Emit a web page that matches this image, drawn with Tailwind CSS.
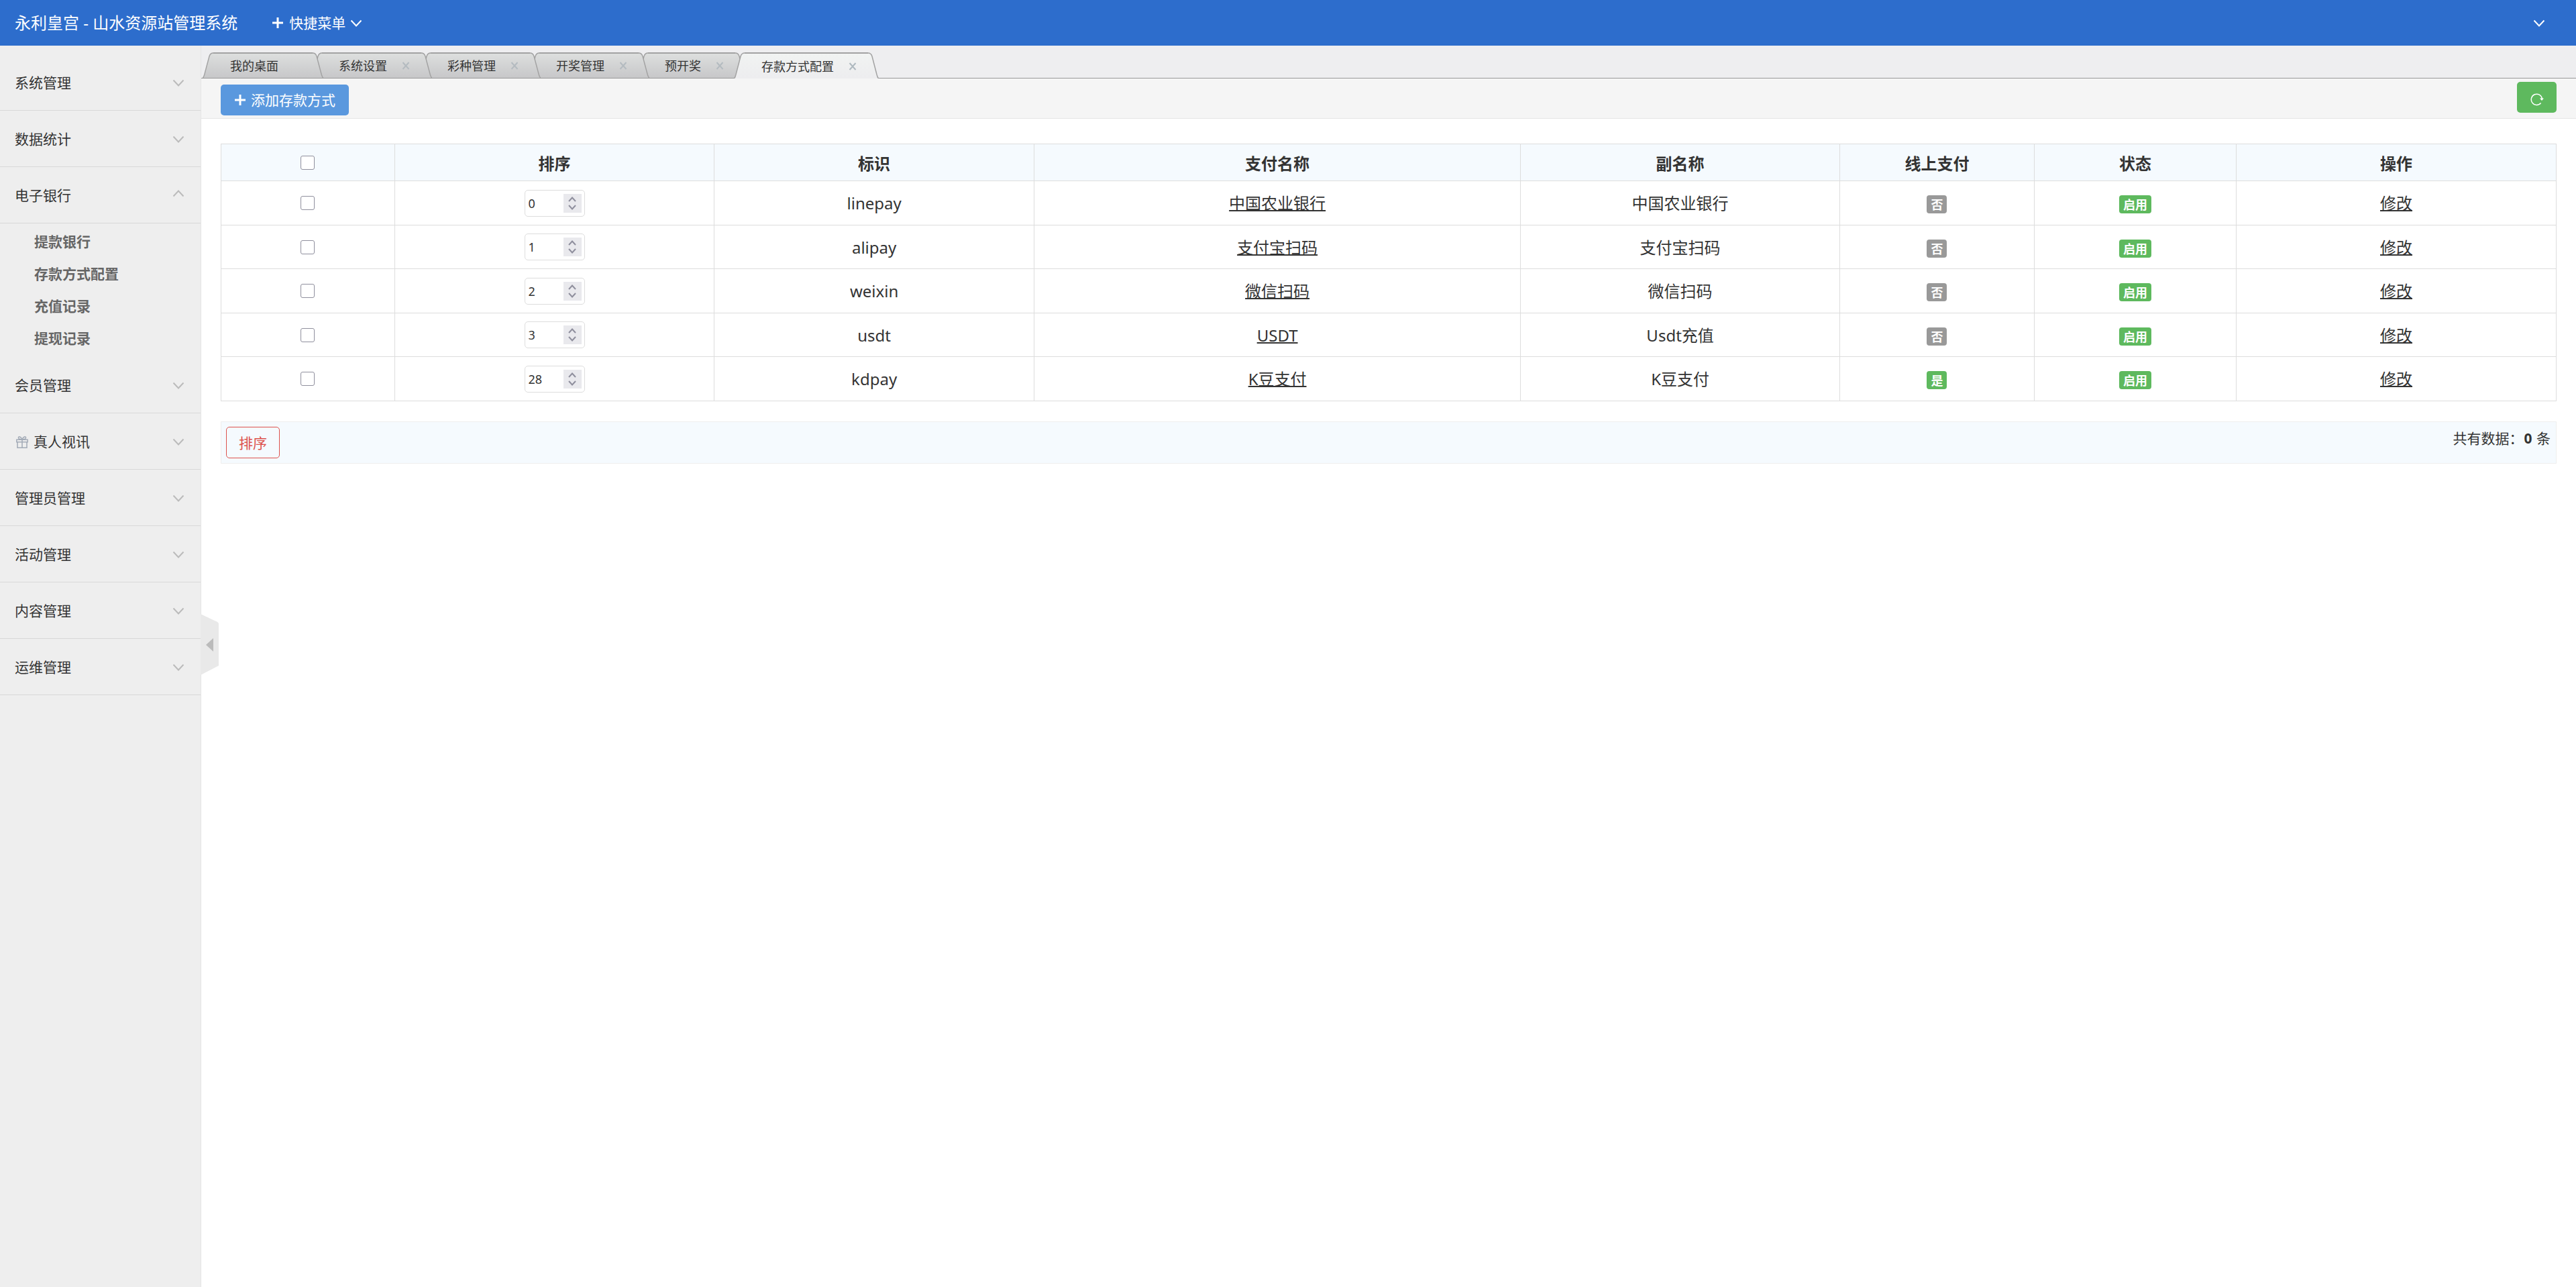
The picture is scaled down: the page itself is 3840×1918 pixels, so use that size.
<!DOCTYPE html>
<html lang="zh-CN">
<head>
  <meta charset="UTF-8" />
  <meta name="viewport" content="width=device-width, initial-scale=1.0"/>
  <title>永利皇宫 - 山水资源站管理系统</title>
  <script src="https://cdn.jsdelivr.net/npm/@tailwindcss/browser@4"></script>
</head>
<body class="min-h-screen flex flex-col bg-white text-[#333] font-['Noto_Sans','Noto_Sans_CJK_SC',sans-serif]">
  <!-- HEADER -->
  <header class="h-[68px] bg-[#2d6dcc] text-white flex items-center pl-[22px] pr-[47px]">
    <a href="#" class="text-2xl leading-8">永利皇宫 - 山水资源站管理系统</a>
    <button type="button" class="ml-[51px] flex items-center text-[21px] leading-7">
      <svg class="w-[18px] h-[18px] mr-2" viewBox="0 0 18 18" fill="none" stroke="currentColor" stroke-width="3"><path d="M9 1v16M1 9h16"/></svg>
      快捷菜单
      <svg class="w-4 h-4 ml-2" viewBox="0 0 16 16" fill="none" stroke="currentColor" stroke-width="2"><path d="M.5 4.500 8 12.500l7.500-8"/></svg>
    </button>
    <button type="button" class="ml-auto" aria-label="账户">
      <svg class="w-4 h-4" viewBox="0 0 16 16" fill="none" stroke="currentColor" stroke-width="2"><path d="M.5 4.500 8 12.500l7.500-8"/></svg>
    </button>
  </header>

  <div class="flex flex-1">
    <!-- SIDEBAR -->
    <aside class="relative w-[300px] shrink-0 bg-[#eee] border-r border-[#e5e5e5]">
      <nav id="menu" class="pt-[13px]"></nav>
      <button type="button" class="absolute left-full top-[847px] w-[27px] h-[91px]" aria-label="收起菜单">
        <svg class="w-[27px] h-[91px]" viewBox="0 0 27 91"><path d="M0 0 21 10q6 2 6 5v62L0 91z" fill="#e9e9e9"/><path d="M8 46 19 36v20z" fill="#bbb"/></svg>
      </button>
    </aside>

    <main class="flex-1 min-w-0">
      <!-- TABS -->
      <div class="h-[49px] bg-[#eeeef0] border-b border-[#999] flex items-end pl-[2px]">
        <ul id="tabs" class="flex items-end"></ul>
      </div>

      <!-- TOOLBAR -->
      <div class="h-[60px] bg-[#f5f5f5] border-b border-[#e5e5e5] flex items-start justify-between px-[29px]">
        <button type="button" class="mt-[9px] h-[46px] px-5 rounded-[5px] bg-[#5a98de] text-white text-[21px] leading-7 flex items-center">
          <svg class="w-[18px] h-[18px] mr-[7px]" viewBox="0 0 18 18" fill="none" stroke="currentColor" stroke-width="3"><path d="M9 1v16M1 9h16"/></svg>
          添加存款方式
        </button>
        <button type="button" class="mt-[5px] w-[59px] h-[46px] rounded-[5px] bg-[#5eb95e] text-white flex items-center justify-center pt-1.5" aria-label="刷新">
          <svg class="w-5 h-5" viewBox="0 0 20 20" fill="none" stroke="currentColor"><path d="M15.600 15.500A8.100 8.100 0 1 1 17.400 9" stroke-width="1.500"/><path d="M14 8.500h6l-3 3.500z" fill="currentColor" stroke="none"/></svg>
        </button>
      </div>

      <!-- TABLE -->
      <section class="px-[29px] pt-[37px]">
        <table class="w-full table-fixed border-collapse text-2xl leading-8 text-center">
          <colgroup>
            <col class="w-[7.44%]"><col class="w-[13.68%]"><col class="w-[13.70%]"><col class="w-[20.83%]">
            <col class="w-[13.67%]"><col class="w-[8.33%]"><col class="w-[8.65%]"><col class="w-[13.70%]">
          </colgroup>
          <thead>
            <tr class="h-[55px] bg-[#f5fafe]">
              <th class="border border-[#ddd]"><input type="checkbox" aria-label="全选" class="block mx-auto size-[21px] appearance-none bg-white border border-[#8f8f9d] rounded-[3px]"></th>
              <th class="border border-[#ddd] pt-1">排序</th>
              <th class="border border-[#ddd] pt-1">标识</th>
              <th class="border border-[#ddd] pt-1">支付名称</th>
              <th class="border border-[#ddd] pt-1">副名称</th>
              <th class="border border-[#ddd] pt-1">线上支付</th>
              <th class="border border-[#ddd] pt-1">状态</th>
              <th class="border border-[#ddd] pt-1">操作</th>
            </tr>
          </thead>
          <tbody id="payList"></tbody>
        </table>

        <div class="mt-[30px] h-[63px] bg-[#f5fafe] border border-[#eee] flex items-start justify-between pl-[7px] pr-2 pt-[7px]">
          <button type="button" class="w-20 h-[47px] border border-[#dd514c] rounded-[5px] text-[#dd514c] text-[21px] leading-7">排序</button>
          <p class="pt-px text-[21px] leading-8">共有数据：<strong class="mx-px">0</strong> 条</p>
        </div>
      </section>
    </main>
  </div>

  <script>
    const menu = [
      { name: '系统管理' },
      { name: '数据统计' },
      { name: '电子银行', children: ['提款银行', '存款方式配置', '充值记录', '提现记录'] },
      { name: '会员管理' },
      { name: '真人视讯', gift: true },
      { name: '管理员管理' },
      { name: '活动管理' },
      { name: '内容管理' },
      { name: '运维管理' }
    ];
    const tabs = ['我的桌面', '系统设置', '彩种管理', '开奖管理', '预开奖', '存款方式配置'];
    const zIndex = ['z-[6]', 'z-[5]', 'z-[4]', 'z-[3]', 'z-[2]', 'z-[7]'];
    const payments = [
      { sort: 0, code: 'linepay', name: '中国农业银行', sub: '中国农业银行', online: false },
      { sort: 1, code: 'alipay', name: '支付宝扫码', sub: '支付宝扫码', online: false },
      { sort: 2, code: 'weixin', name: '微信扫码', sub: '微信扫码', online: false },
      { sort: 3, code: 'usdt', name: 'USDT', sub: 'Usdt充值', online: false },
      { sort: 28, code: 'kdpay', name: 'K豆支付', sub: 'K豆支付', online: true }
    ];

    const gift = `<svg class="w-[18px] h-[18px] mr-2 ml-[2px] mt-[2px]" viewBox="0 0 18 18" fill="none" stroke="#a3abb7" stroke-width="1.500"><path d="M.8 5.300h16.400v3.500H.8zM2 8.800v8.400h14V8.800M9 5v12M9 5C6 5 3 4 3.500 2S7 .500 9 5c2-4.500 5-5 5.500-3S12 5 9 5"/></svg>`;

    // 左侧菜单
    document.getElementById('menu').innerHTML = menu.map(item => `
      <button type="button" class="w-full h-[84px] border-b border-[#d8d8d8] flex items-center pl-[22px] pr-[25px] text-[21px] leading-7 text-left">
        ${item.gift ? gift : ''}${item.name}
        <svg class="w-4 h-4 ml-auto" viewBox="0 0 16 16" fill="none" stroke="#bbb" stroke-width="2"><path d="${item.children ? 'M.5 9.500 8 1.500l7.500 8' : 'M.5 4.500 8 12.500l7.500-8'}"/></svg>
      </button>
      ${item.children ? `<ul class="pt-[3px] pb-1">${item.children.map(c => `<li><a href="#" class="block pl-[51px] text-[21px] leading-[48px] font-bold text-[#666]">${c}</a></li>`).join('')}</ul>` : ''}
    `).join('');

    // 标签页
    document.getElementById('tabs').innerHTML = tabs.map((name, i) => {
      const active = i === tabs.length - 1;
      const fill = active ? 'url(#on)' : 'url(#off)';
      return `
        <li class="relative flex items-end ${zIndex[i]} ${i ? '-ml-[18px]' : ''} ${active ? '-mb-px' : ''}">
          <svg class="w-4 ${active ? 'h-[39px]' : 'h-[38px]'}" viewBox="0 0 16 39" preserveAspectRatio="none">
            <path d="M0 39C2 38 2 36 3 33L10 6Q11.500.500 16 .500V39z" fill="${fill}"/><path d="M0 39C2 38 2 36 3 33L10 6Q11.500 1 16 1" fill="none" stroke="#a2a2a2" stroke-width="1.500"/>
          </svg>
          <div class="flex items-center pl-[25px] border-t-2 border-[#a2a2a2] bg-linear-to-b ${active ? 'h-[39px] from-[#f1f3f2] to-[#ededef]' : 'h-[38px] from-[#dddfde] to-[#c7c7c9]'}">
            <a href="#" class="text-[18px] leading-6">${name}</a>
            ${i ? `<button type="button" class="ml-[22px] mr-[17px]" aria-label="关闭"><svg class="w-3 h-3" viewBox="0 0 12 12" stroke="${active ? '#aeb9bf' : '#b4bbc0'}" stroke-width="2"><path d="m1.500 1 9 10M10.500 1l-9 10"/></svg></button>` : '<span class="w-[51px]"></span>'}
          </div>
          <svg class="w-4 ${active ? 'h-[39px]' : 'h-[38px]'}" viewBox="0 0 16 39" preserveAspectRatio="none">
            <path d="M16 39C14 38 14 36 13 33L6 6Q4.500.500 0 .500V39z" fill="${fill}"/><path d="M16 39C14 38 14 36 13 33L6 6Q4.500 1 0 1" fill="none" stroke="#a2a2a2" stroke-width="1.500"/>
          </svg>
        </li>`;
    }).join('');

    // 存款方式列表
    document.getElementById('payList').innerHTML = payments.map(p => `
      <tr class="odd:h-[66px] even:h-[65px]">
        <td class="border border-[#ddd]"><input type="checkbox" aria-label="选择 ${p.code}" class="block mx-auto size-[21px] appearance-none bg-white border border-[#8f8f9d] rounded-[3px]"></td>
        <td class="border border-[#ddd]">
          <div class="mx-auto w-[90px] h-10 pl-[5px] pr-1 border border-[#ddd] rounded-[5px] flex items-center">
            <input type="number" value="${p.sort}" aria-label="排序 ${p.code}" class="w-0 flex-1 text-[18px] leading-6 outline-none [appearance:textfield]">
            <span class="w-[27px] h-7 bg-[#e9e9ed] flex items-center justify-center">
              <svg class="w-3 h-5" viewBox="0 0 12 20" fill="none" stroke="#8f8f9d" stroke-width="2"><path d="m1 7 5-5.500L11 7M1 13l5 5.500 5-5.500"/></svg>
            </span>
          </div>
        </td>
        <td class="border border-[#ddd] pt-px">${p.code}</td>
        <td class="border border-[#ddd] pt-px"><a href="#" class="underline decoration-2">${p.name}</a></td>
        <td class="border border-[#ddd] pt-px">${p.sub}</td>
        <td class="border border-[#ddd] pt-1"><span class="block w-fit mx-auto px-1.5 pt-0.5 rounded-[4px] text-[18px] leading-[25px] font-bold text-white ${p.online ? 'bg-[#5eb95e]' : 'bg-[#999]'}">${p.online ? '是' : '否'}</span></td>
        <td class="border border-[#ddd] pt-1"><span class="block w-fit mx-auto px-1.5 pt-0.5 rounded-[4px] text-[18px] leading-[25px] font-bold text-white bg-[#5eb95e]">启用</span></td>
        <td class="border border-[#ddd] pt-px"><a href="#" class="underline decoration-2">修改</a></td>
      </tr>
    `).join('');
  </script>

  <!-- 标签页两侧的渐变 -->
  <svg class="absolute w-0 h-0" aria-hidden="true">
    <defs>
      <linearGradient id="off" x1="0" y1="0" x2="0" y2="1"><stop offset="0" stop-color="#dddfde"/><stop offset="1" stop-color="#c7c7c9"/></linearGradient>
      <linearGradient id="on" x1="0" y1="0" x2="0" y2="1"><stop offset="0" stop-color="#f1f3f2"/><stop offset="1" stop-color="#ededef"/></linearGradient>
    </defs>
  </svg>
</body>
</html>
